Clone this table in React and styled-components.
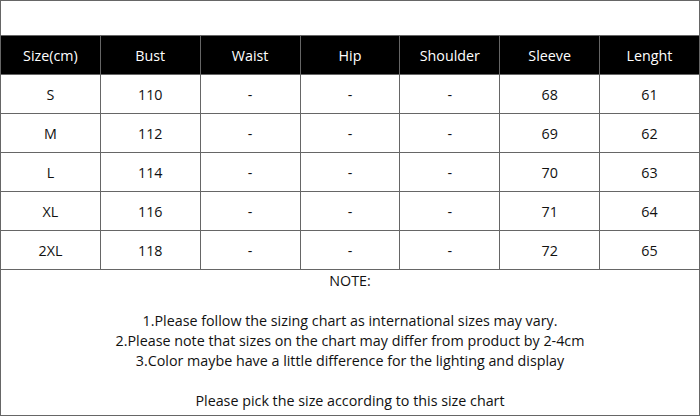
import React from 'react';
import styled, { createGlobalStyle } from 'styled-components';

const GlobalStyle = createGlobalStyle`
	html, body {
		margin: 0;
		padding: 0;
		background: #fff;
	}
	body {
		font-family: 'Open Sans', 'Noto Sans', sans-serif;
	}
`;

const line = '#666';

const Frame = styled.div`
	width: 700px;
	height: 416px;
	box-sizing: border-box;
	border: 1px solid ${line};
	background: #fff;
	color: #111;
	font-size: 14.3px;
`;

const TopSpace = styled.div`
	height: 34px;
`;

const Table = styled.table`
	width: calc(100% + 2px);
	margin: 0 -1px;
	border-collapse: collapse;
	table-layout: fixed;
`;

const Cell = styled.td`
	border: 1px solid ${line};
	height: 38px;
	padding: 0;
	text-align: center;
	vertical-align: middle;
	background: ${({ head }) => (head ? '#000' : '#fff')};
	color: ${({ head }) => (head ? '#fff' : '#111')};
`;

const Note = styled.div`
	text-align: center;
	line-height: 20px;
	padding-top: 1px;
`;

const headers = ['Size(cm)', 'Bust', 'Waist', 'Hip', 'Shoulder', 'Sleeve', 'Lenght'];

const rows = [
	['S', '110', '-', '-', '-', '68', '61'],
	['M', '112', '-', '-', '-', '69', '62'],
	['L', '114', '-', '-', '-', '70', '63'],
	['XL', '116', '-', '-', '-', '71', '64'],
	['2XL', '118', '-', '-', '-', '72', '65'],
];

const App = () => {
	return (
		<>
			<GlobalStyle />
			<Frame>
				<TopSpace />
				<Table>
					<tbody>
						<tr>
							{headers.map((h) => (
								<Cell head key={h}>
									{h}
								</Cell>
							))}
						</tr>
						{rows.map((r) => (
							<tr key={r[0]}>
								{r.map((v, i) => (
									<Cell key={i}>{v}</Cell>
								))}
							</tr>
						))}
					</tbody>
				</Table>
				<Note>
					<div>NOTE:</div>
					<br />
					<div>1.Please follow the sizing chart as international sizes may vary.</div>
					<div>2.Please note that sizes on the chart may differ from product by 2-4cm</div>
					<div>3.Color maybe have a little difference for the lighting and display</div>
					<br />
					<div>Please pick the size according to this size chart</div>
				</Note>
			</Frame>
		</>
	);
};

export default App;
